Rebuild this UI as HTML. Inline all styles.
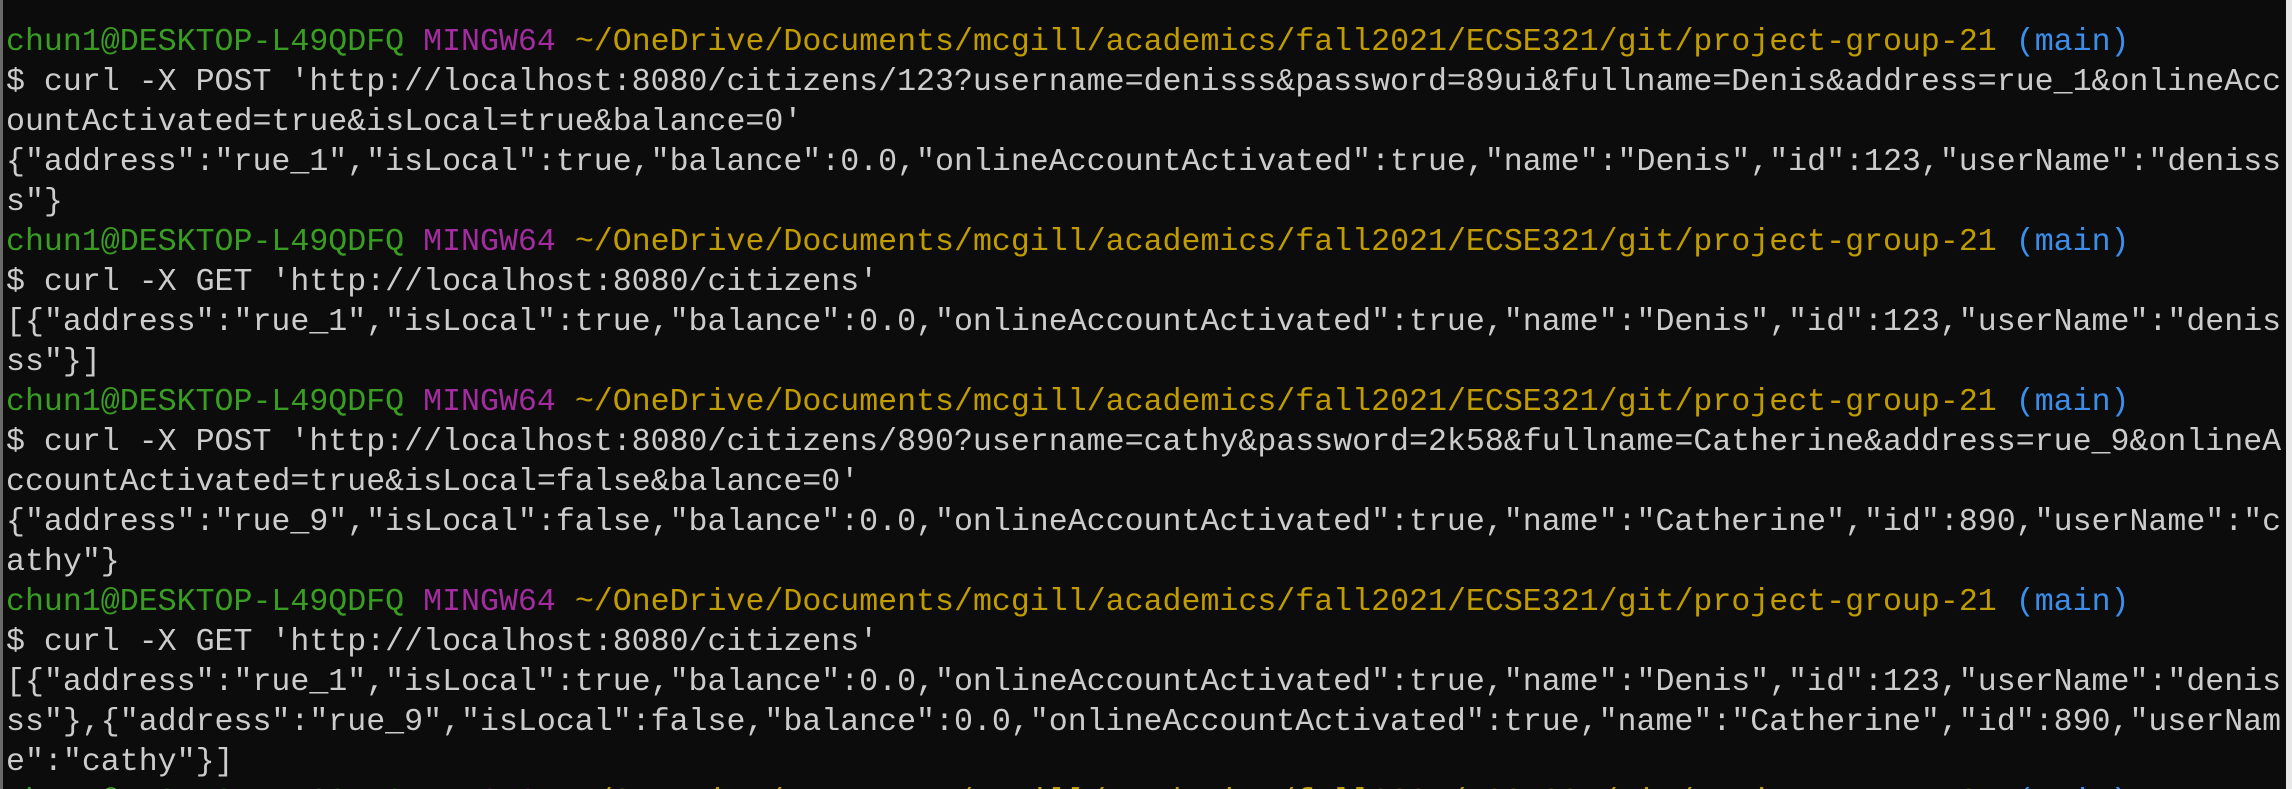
<!DOCTYPE html>
<html><head><meta charset="utf-8"><style>
html,body{margin:0;padding:0;width:2292px;height:789px;overflow:hidden;}
body{background:#0c0c0c;position:relative;}
#t{position:absolute;left:6px;top:23px;font-family:"Liberation Mono","DejaVu Sans Mono",monospace;font-size:31.6px;line-height:40px;color:#cccccc;white-space:pre;}
.g{color:#3a9d23}.m{color:#a22ca0}.y{color:#c19c00}.b{color:#3b8eea}
#l{position:absolute;left:0;top:0;width:3px;height:789px;background:#6a6a6a;}
#r{position:absolute;right:0;top:0;width:6px;height:789px;background:#e8e8e8;}
</style></head><body>
<div id="l"></div>
<div id="t"><div><span class="g">chun1@DESKTOP-L49QDFQ</span> <span class="m">MINGW64</span> <span class="y">~/OneDrive/Documents/mcgill/academics/fall2021/ECSE321/git/project-group-21</span> <span class="b">(main)</span></div><div>$ curl -X POST 'http://localhost:8080/citizens/123?username=denisss&amp;password=89ui&amp;fullname=Denis&amp;address=rue_1&amp;onlineAcc</div><div>ountActivated=true&amp;isLocal=true&amp;balance=0'</div><div>{"address":"rue_1","isLocal":true,"balance":0.0,"onlineAccountActivated":true,"name":"Denis","id":123,"userName":"deniss</div><div>s"}</div><div><span class="g">chun1@DESKTOP-L49QDFQ</span> <span class="m">MINGW64</span> <span class="y">~/OneDrive/Documents/mcgill/academics/fall2021/ECSE321/git/project-group-21</span> <span class="b">(main)</span></div><div>$ curl -X GET 'http://localhost:8080/citizens'</div><div>[{"address":"rue_1","isLocal":true,"balance":0.0,"onlineAccountActivated":true,"name":"Denis","id":123,"userName":"denis</div><div>ss"}]</div><div><span class="g">chun1@DESKTOP-L49QDFQ</span> <span class="m">MINGW64</span> <span class="y">~/OneDrive/Documents/mcgill/academics/fall2021/ECSE321/git/project-group-21</span> <span class="b">(main)</span></div><div>$ curl -X POST 'http://localhost:8080/citizens/890?username=cathy&amp;password=2k58&amp;fullname=Catherine&amp;address=rue_9&amp;onlineA</div><div>ccountActivated=true&amp;isLocal=false&amp;balance=0'</div><div>{"address":"rue_9","isLocal":false,"balance":0.0,"onlineAccountActivated":true,"name":"Catherine","id":890,"userName":"c</div><div>athy"}</div><div><span class="g">chun1@DESKTOP-L49QDFQ</span> <span class="m">MINGW64</span> <span class="y">~/OneDrive/Documents/mcgill/academics/fall2021/ECSE321/git/project-group-21</span> <span class="b">(main)</span></div><div>$ curl -X GET 'http://localhost:8080/citizens'</div><div>[{"address":"rue_1","isLocal":true,"balance":0.0,"onlineAccountActivated":true,"name":"Denis","id":123,"userName":"denis</div><div>ss"},{"address":"rue_9","isLocal":false,"balance":0.0,"onlineAccountActivated":true,"name":"Catherine","id":890,"userNam</div><div>e":"cathy"}]</div><div><span class="g">chun1@DESKTOP-L49QDFQ</span> <span class="m">MINGW64</span> <span class="y">~/OneDrive/Documents/mcgill/academics/fall2021/ECSE321/git/project-group-21</span> <span class="b">(main)</span></div></div>
<div id="r"></div>
</body></html>
